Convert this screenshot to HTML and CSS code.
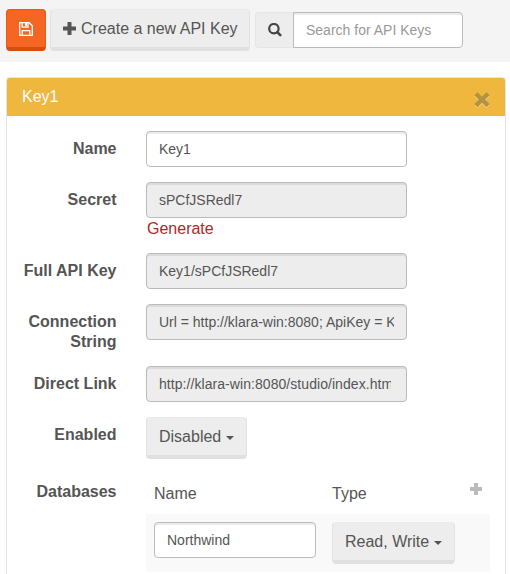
FILE: index.html
```
<!DOCTYPE html>
<html lang="en">
<head>
<meta charset="utf-8">
<title>API Keys</title>
<link rel="stylesheet" href="styles.css">
</head>
<body>
<header class="toolbar">
  <button class="btn btn-save" aria-label="Save">
    <svg width="14" height="14" viewBox="0 0 14 14" fill="none" stroke="#fff" stroke-width="1.3"><path d="M.7 .7H10.2L13.3 3.8V13.3H.7ZM3.2 13.3V8.6H10.8V13.3M3.2 .7V5.2H9V.7"/><path d="M7.1 1V4.4" stroke-width="2"/></svg>
  </button>
  <button class="btn btn-create">
    <svg width="13" height="13" viewBox="0 0 13 13" fill="#555"><path d="M4.5 .5Q4.5 0 5 0H8Q8.5 0 8.5 .5V4.5H12.5Q13 4.5 13 5V8Q13 8.5 12.5 8.5H8.5V12.5Q8.5 13 8 13H5Q4.5 13 4.5 12.5V8.5H.5Q0 8.5 0 8V5Q0 4.5 .5 4.5H4.5Z"/></svg>
    <span>Create a new API Key</span>
  </button>
  <div class="search">
    <span class="addon"><svg width="14" height="14" viewBox="0 0 14 14" fill="none" stroke="#444"><circle cx="5.9" cy="5.7" r="4.7" stroke-width="2.2"/><path d="M9.3 9.1L12.3 12.1" stroke-width="2.6" stroke-linecap="round"/></svg></span>
    <input class="control" type="text" placeholder="Search for API Keys">
  </div>
</header>
<main class="panel">
  <div class="panel-head">
    <span>Key1</span>
    <svg width="16" height="16" viewBox="0 0 16 16" stroke-linecap="square" stroke-width="4.4"><path d="M3.5 4.3L12.5 13.1M12.5 4.3L3.5 13.1" stroke="#f6d58c"/><path d="M3.5 3.3L12.5 12.1M12.5 3.3L3.5 12.1" stroke="#b4923f"/></svg>
  </div>
  <form class="form">
    <div class="row"><label>Name</label><div class="field"><input class="control" type="text" value="Key1"></div></div>
    <div class="row"><label>Secret</label><div class="field"><input class="control" type="text" value="sPCfJSRedl7" readonly><a class="generate">Generate</a></div></div>
    <div class="row"><label>Full API Key</label><div class="field"><input class="control" type="text" value="Key1/sPCfJSRedl7" readonly></div></div>
    <div class="row"><label>Connection String</label><div class="field"><input class="control" type="text" value="Url = http://klara-win:8080; ApiKey = Key1/sPCfJSRedl7; Database = Northwind" readonly></div></div>
    <div class="row"><label>Direct Link</label><div class="field"><input class="control link" type="text" value="http://klara-win:8080/studio/index.html#has-api-key" readonly></div></div>
    <div class="row"><label>Enabled</label><button type="button" class="btn">Disabled<i class="caret"></i></button></div>
    <div class="row"><label>Databases</label>
      <div class="table">
        <div class="table-head">
          <span>Name</span><span>Type</span>
          <svg width="12" height="12" viewBox="0 0 12 12" fill="#bbb"><path d="M4 0H8V4H12V8H8V12H4V8H0V4H4Z"/></svg>
        </div>
        <div class="table-row">
          <input class="control" type="text" value="Northwind">
          <button type="button" class="btn">Read, Write<i class="caret"></i></button>
        </div>
      </div>
    </div>
  </form>
</main>
</body>
</html>
```
FILE: styles.css
```
* { box-sizing: border-box; }
body {
  margin: 0;
  height: 574px;
  background: #fff;
  color: #555;
  font: 16px/20px "Liberation Sans", Arial, sans-serif;
}
svg { display: block; flex: none; }
.toolbar {
  display: flex;
  align-items: flex-start;
  height: 62px;
  padding: 9px 6px 0;
  background: #f4f4f4;
}
.btn {
  display: flex;
  align-items: center;
  height: 42px;
  margin: 0;
  padding: 0 12px;
  border: 1px solid #e2e2e2;
  border-top-color: #ebebeb;
  border-bottom: 4px solid #e0e0e0;
  border-radius: 4px;
  background: #ededed;
  color: #555;
  font: inherit;
  white-space: nowrap;
}
.btn-save {
  justify-content: center;
  width: 40px;
  padding: 0 1px 0 0;
  border-color: #e9571a;
  border-bottom-color: #d94c0c;
  background: #f56624;
}
.btn-create { width: 200px; margin-left: 4px; gap: 5px; }
.search { display: flex; margin: 3px 0 0 5px; }
.addon {
  display: flex;
  align-items: center;
  justify-content: center;
  width: 38px;
  height: 36px;
  border: 1px solid #e5e5e5;
  border-right: 0;
  border-radius: 4px 0 0 4px;
  background: #ededed;
}
.control {
  display: block;
  width: 100%;
  height: 36px;
  margin: 0;
  padding: 6px 12px;
  border: 1px solid #bbb;
  border-radius: 4px;
  outline: 0;
  background: #fff;
  box-shadow: inset 0 2px 0 rgba(0, 0, 0, .075);
  color: #555;
  font: 14px/20px "Liberation Sans", Arial, sans-serif;
}
.control[readonly] { background: #ededed; }
.control.link { padding-right: 15px; letter-spacing: .06px; }
.control::placeholder { color: #999; opacity: 1; }
.search .control { width: 170px; border-radius: 0 4px 4px 0; }
.panel {
  width: 500px;
  height: 497px;
  margin: 15px 0 0 6px;
  border: 1px solid #e4e4e4;
  border-bottom: 0;
  border-radius: 4px 4px 0 0;
}
.panel-head {
  display: flex;
  align-items: center;
  justify-content: space-between;
  height: 38px;
  padding: 0 15px;
  border-radius: 3px 3px 0 0;
  background: #efb73e;
  color: #fff;
}
.panel-head svg { margin-top: 5px; }
.form { display: grid; gap: 15px; padding: 15px 15px 0; }
.row { display: flex; align-items: flex-start; }
.row label {
  width: 95px;
  margin: 0 29.5px 0 -.5px;
  padding-top: 8px;
  font-weight: bold;
  text-align: right;
}
.row:nth-child(4) { height: 47px; }
.field { width: 261px; }
.generate { display: block; height: 20px; padding: 1px 0 0 1px; color: #b3252b; }
.caret {
  margin: 2px 0 0 5px;
  border: 4px solid transparent;
  border-top-color: #555;
  border-bottom: 0;
}
.table { width: 344px; }
.table-head {
  display: grid;
  grid-template-columns: 178px 138px 12px;
  height: 40px;
  padding: 10px 8px 0;
}
.table-head svg { margin-top: -1px; }
.table-row {
  display: flex;
  gap: 16px;
  height: 58px;
  padding: 8px;
  background: #f9f9f9;
}
.table-row .control { width: 162px; }
```
